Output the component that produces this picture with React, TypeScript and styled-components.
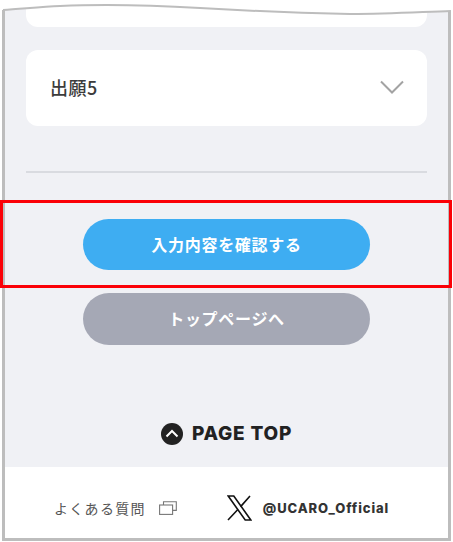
import { createGlobalStyle } from 'styled-components';
import styled from 'styled-components';

const GlobalStyle = createGlobalStyle`
    html, body {
        margin: 0;
        padding: 0;
        background: #fff;
        font-family: "Noto Sans CJK JP", "Noto Sans", sans-serif;
    }
`;

const Shot = styled.div`
    position: relative;
    width: 453px;
    height: 542px;
    overflow: hidden;
    padding: 8px 0 0 2px;
    box-sizing: border-box;
`;

const Frame = styled.div`
    width: 449px;
    height: 533px;
    box-sizing: border-box;
    border: 3px solid #bdbdbd;
    border-top: 0;
    background: #f0f1f5;
    display: flex;
    flex-direction: column;
`;

const Main = styled.main`
    flex: 1;
    padding: 0 21px;
    display: flex;
    flex-direction: column;
`;

const CardTail = styled.div`
    height: 19px;
    background: #fff;
    border-radius: 0 0 12px 12px;
`;

const AccordionRow = styled.div`
    margin-top: 23px;
    height: 76px;
    background: #fff;
    border-radius: 12px;
    display: flex;
    align-items: center;
    justify-content: space-between;
    padding: 0 23px 2px 24px;
    box-sizing: border-box;
    font-size: 18px;
    font-weight: 500;
    letter-spacing: 0.5px;
    color: #3c3c3c;
`;

const Divider = styled.hr`
    margin: 45px 0 0;
    border: 0;
    height: 2px;
    background: #d9dbe0;
`;

const Buttons = styled.div`
    margin-top: 46px;
    display: flex;
    flex-direction: column;
    align-items: center;
    gap: 23px;
`;

const Pill = styled.button<{ $tone: 'primary' | 'muted' }>`
    width: 287px;
    height: ${p => (p.$tone === 'primary' ? 51 : 52)}px;
    padding: 0 0 2px;
    border: 0;
    border-radius: 26px;
    background: ${p => (p.$tone === 'primary' ? '#3eadf2' : '#a5a8b5')};
    color: #fff;
    font-family: inherit;
    font-size: 16px;
    font-weight: 700;
    letter-spacing: 0.7px;
`;

const PageTop = styled.a`
    margin-top: 77px;
    display: flex;
    justify-content: center;
    align-items: center;
    gap: 9px;
    font-family: Inter, "Liberation Sans", sans-serif;
    font-size: 19px;
    font-weight: 800;
    letter-spacing: 0.8px;
    line-height: 24px;
    color: #222;
`;

const Footer = styled.footer`
    height: 71px;
    box-sizing: border-box;
    background: #fff;
    display: flex;
    align-items: center;
    padding: 10px 0 0 49px;
`;

const FaqLink = styled.a`
    display: flex;
    align-items: center;
    gap: 13px;
    font-size: 14px;
    color: #555;
    letter-spacing: 1.3px;
`;

const XLink = styled.a`
    margin-left: 50px;
    display: flex;
    align-items: center;
    gap: 11px;
    font-family: Inter, "Liberation Sans", sans-serif;
    font-size: 13px;
    font-weight: 800;
    letter-spacing: 0.9px;
    color: #333;
`;

const TornEdge = styled.svg`
    position: absolute;
    left: 0;
    top: 0;
`;

const Highlight = styled.div`
    position: absolute;
    left: 0;
    top: 200px;
    width: 452px;
    height: 88px;
    box-sizing: border-box;
    border: 3px solid #fb0007;
    pointer-events: none;
`;

function App() {
    return (
        <>
            <GlobalStyle />
            <Shot>
                <Frame>
                    <Main>
                        <CardTail />
                        <AccordionRow>
                            出願5
                            <svg width="24" height="15" viewBox="0 0 24 15" fill="none" stroke="#a3a3a3" strokeWidth="2">
                                <path d="M1 1.5l11 11 11-11" />
                            </svg>
                        </AccordionRow>
                        <Divider />
                        <Buttons>
                            <Pill $tone="primary">入力内容を確認する</Pill>
                            <Pill $tone="muted">トップページへ</Pill>
                        </Buttons>
                        <PageTop>
                            <svg width="22" height="22" viewBox="0 0 22 22">
                                <circle cx="11" cy="11" r="11" fill="#222" />
                                <path d="M5.5 13.5L11 8l5.5 5.5" fill="none" stroke="#fff" strokeWidth="2" />
                            </svg>
                            PAGE TOP
                        </PageTop>
                    </Main>
                    <Footer>
                        <FaqLink>
                            よくある質問
                            <svg width="18" height="14" viewBox="0 0 18 14" fill="none" stroke="#777" strokeWidth="1.1">
                                <rect x="0.6" y="4" width="13" height="9.4" />
                                <path d="M4.5 4V0.8h12.8v8.6h-3.6" />
                            </svg>
                        </FaqLink>
                        <XLink>
                            <svg width="25" height="26" viewBox="0 0 25 26" fill="none" stroke="#111" strokeWidth="1.6">
                                <path d="M1.2 1h5.6l17 24h-5.6z" />
                                <path d="M23 1L13.6 11.6M10.6 14.8L1 25" />
                            </svg>
                            @UCARO_Official
                        </XLink>
                    </Footer>
                </Frame>
                <TornEdge width="453" height="18" viewBox="0 0 453 18">
                    <path d="M0 0H453V11C420 11 390 14 350 14C300 14 250 11 200 8C150 5 100 4 60 6C40 7 20 9 2 10Z" fill="#fff" />
                    <path d="M3 10C20 9 40 7 60 6C100 4 150 5 200 8C250 11 300 13 350 14C390 14 420 12 451 11" fill="none" stroke="#bdbdbd" strokeWidth="2" />
                </TornEdge>
                <Highlight />
            </Shot>
        </>
    );
}

export default App;
